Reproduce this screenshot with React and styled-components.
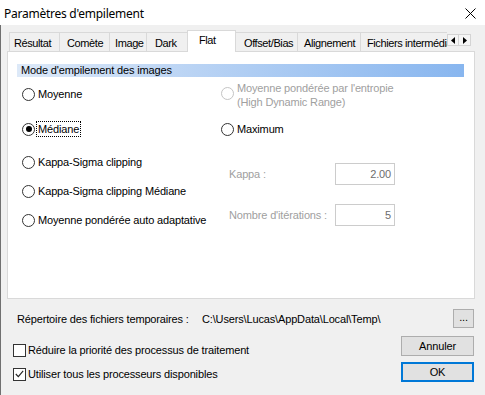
import React from "react";
import styled, { createGlobalStyle, css } from "styled-components";

const Global = createGlobalStyle`
  html, body {
    margin: 0;
    padding: 0;
    background: #f0f0f0;
  }
  body {
    font-family: "Liberation Sans", Arial, sans-serif;
    font-size: 11px;
    letter-spacing: -0.15px;
    color: #000;
  }
`;

const Window = styled.div`
  width: 485px;
  height: 395px;
  display: flex;
  flex-direction: column;
  background: #f0f0f0;
  overflow: hidden;
`;

const TitleBar = styled.div`
  height: 25px;
  flex: none;
  background: #fff;
  display: flex;
  align-items: center;
  justify-content: space-between;
  padding: 0 9px 0 4px;
`;

const Title = styled.span`
  font-family: "Noto Sans", "Liberation Sans", sans-serif;
  font-size: 12px;
  letter-spacing: -0.25px;
  padding-top: 1px;
`;

const Close = styled.svg`
  width: 11px;
  height: 11px;
  margin-top: 2px;
`;

const Body = styled.div`
  flex: 1;
  border-left: 1px solid #707070;
  padding: 5px 10px 0 6px;
  display: flex;
  flex-direction: column;
`;

const TabStrip = styled.div`
  height: 21px;
  display: flex;
  align-items: flex-end;
  position: relative;
  z-index: 1;
`;

const TabList = styled.div`
  display: flex;
  align-items: flex-end;
  box-sizing: border-box;
  width: 440px;
  padding-left: 2px;
  overflow: hidden;
  height: 22px;
  margin-bottom: -1px;
`;

const Tab = styled.div`
  flex: none;
  box-sizing: border-box;
  width: ${(p) => p.$w}px;
  height: 19px;
  padding-left: ${(p) => p.$pl}px;
  border: 1px solid #d9d9d9;
  border-bottom: none;
  margin-right: -1px;
  margin-bottom: 1px;
  background: #f0f0f0;
  line-height: 20px;
  letter-spacing: -0.4px;
  white-space: nowrap;
  overflow: hidden;
  ${(p) =>
    p.$active &&
    css`
      height: 22px;
      margin-bottom: 0;
      background: #fff;
      line-height: 19px;
      position: relative;
      z-index: 2;
    `}
`;

const Arrows = styled.div`
  display: flex;
  margin: 0 0 5px 0;
`;

const ArrowBtn = styled.div`
  width: 12px;
  height: 12px;
  box-sizing: border-box;
  border: 1px solid #d4d4d4;
  background: #f5f5f5;
  display: grid;
  place-items: center;
  & + & {
    border-left: none;
  }
`;

const Panel = styled.div`
  height: 248px;
  box-sizing: border-box;
  background: #fff;
  border: 1px solid #d9d9d9;
  padding: 12px 10px 0 9px;
  width: 468px;
`;

const HeaderBar = styled.div`
  height: 13px;
  line-height: 13px;
  padding-left: 4px;
  background: linear-gradient(to right, #dde9f8 0%, #b9d3f4 40%, #88b6ef 100%);
`;

const Columns = styled.div`
  display: grid;
  grid-template-columns: 199px 1fr;
  padding-left: 5px;
`;

const Column = styled.div`
  display: flex;
  flex-direction: column;
`;

const Option = styled.div`
  display: flex;
  align-items: ${(p) => (p.$multi ? "flex-start" : "center")};
  gap: 3px;
  min-height: 16px;
  margin-top: ${(p) => p.$mt}px;
  color: ${(p) => (p.$disabled ? "#a0a0a0" : "#000")};
`;

const Radio = styled.span`
  flex: none;
  width: 13px;
  height: 13px;
  box-sizing: border-box;
  border-radius: 50%;
  border: 1px solid ${(p) => (p.$disabled ? "#c4c4c4" : "#333")};
  background: #fff;
  display: grid;
  place-items: center;
  margin-top: ${(p) => p.$mt || 0}px;
  &::after {
    content: "";
    width: 6px;
    height: 6px;
    border-radius: 50%;
    background: ${(p) => (p.$checked ? "#000" : "transparent")};
  }
`;

const Label = styled.span`
  line-height: 14px;
  ${(p) =>
    p.$focused &&
    css`
      border: 1px dotted #000;
      padding: 0 1px;
      margin-left: -2px;
    `}
`;

const FieldRow = styled.div`
  display: flex;
  align-items: center;
  height: 22px;
  margin-top: ${(p) => p.$mt}px;
  padding-left: 8px;
  color: #a0a0a0;
`;

const FieldLabel = styled.span`
  width: 106px;
`;

const Input = styled.div`
  width: 60px;
  height: 22px;
  box-sizing: border-box;
  border: 1px solid #cccccc;
  background: #fff;
  color: #6d6d6d;
  text-align: right;
  padding-right: 3px;
  line-height: 20px;
`;

const TempRow = styled.div`
  display: flex;
  align-items: center;
  height: 19px;
  margin-top: 10px;
  padding-left: 10px;
`;

const TempLabel = styled.span`
  width: 185px;
`;

const Button = styled.div`
  box-sizing: border-box;
  width: ${(p) => p.$w}px;
  height: ${(p) => p.$h}px;
  background: #e1e1e1;
  border: ${(p) => (p.$default ? "2px solid #0078d7" : "1px solid #adadad")};
  display: grid;
  place-items: center;
  line-height: 1;
`;

const Dots = styled(Button)`
  margin-left: auto;
  margin-right: 1px;
  padding-bottom: 2px;
`;

const Footer = styled.div`
  display: flex;
  justify-content: space-between;
  margin-top: 8px;
  padding-right: 1px;
`;

const Checks = styled.div`
  display: flex;
  flex-direction: column;
  gap: 8px;
  margin-top: 6px;
  padding-left: 6px;
`;

const CheckItem = styled.div`
  display: flex;
  align-items: center;
  gap: 2px;
  height: 16px;
`;

const Box = styled.span`
  width: 13px;
  height: 13px;
  box-sizing: border-box;
  border: 1px solid #333;
  background: #fff;
  display: grid;
  place-items: center;
`;

const Buttons = styled.div`
  display: flex;
  flex-direction: column;
  gap: 6px;
`;

const tabs = [
  { t: "Résultat", w: 51, pl: 4 },
  { t: "Comète", w: 51, pl: 7 },
  { t: "Image", w: 38, pl: 5 },
  { t: "Dark", w: 42, pl: 8 },
  { t: "Flat", w: 49, pl: 11, active: true },
  { t: "Offset/Bias", w: 63, pl: 8 },
  { t: "Alignement", w: 64, pl: 6 },
  { t: "Fichiers intermédiaires", w: 120, pl: 6 },
];

export default function App() {
  return (
    <Window>
      <Global />
      <TitleBar>
        <Title>Paramètres d'empilement</Title>
        <Close viewBox="0 0 11 11">
          <path d="M0.5 0.5 L10.5 10.5 M10.5 0.5 L0.5 10.5" stroke="#000" strokeWidth="1" />
        </Close>
      </TitleBar>
      <Body>
        <TabStrip>
          <TabList>
            {tabs.map((tab) => (
              <Tab key={tab.t} $w={tab.w} $pl={tab.pl} $active={tab.active}>
                {tab.t}
              </Tab>
            ))}
          </TabList>
          <Arrows>
            <ArrowBtn>
              <svg width="4" height="7" viewBox="0 0 4 7">
                <path d="M4 0 L0 3.5 L4 7 Z" fill="#000" />
              </svg>
            </ArrowBtn>
            <ArrowBtn>
              <svg width="4" height="7" viewBox="0 0 4 7">
                <path d="M0 0 L4 3.5 L0 7 Z" fill="#000" />
              </svg>
            </ArrowBtn>
          </Arrows>
        </TabStrip>
        <Panel>
          <HeaderBar>Mode d'empilement des images</HeaderBar>
          <Columns>
            <Column>
              <Option $mt={9}>
                <Radio />
                <Label>Moyenne</Label>
              </Option>
              <Option $mt={19}>
                <Radio $checked />
                <Label $focused>Médiane</Label>
              </Option>
              <Option $mt={17}>
                <Radio />
                <Label>Kappa-Sigma clipping</Label>
              </Option>
              <Option $mt={13}>
                <Radio />
                <Label>Kappa-Sigma clipping Médiane</Label>
              </Option>
              <Option $mt={13}>
                <Radio />
                <Label>Moyenne pondérée auto adaptative</Label>
              </Option>
            </Column>
            <Column>
              <Option $mt={4} $multi $disabled>
                <Radio $disabled $mt={6} />
                <Label>
                  Moyenne pondérée par l'entropie
                  <br />
                  (High Dynamic Range)
                </Label>
              </Option>
              <Option $mt={12}>
                <Radio />
                <Label>Maximum</Label>
              </Option>
              <FieldRow $mt={26}>
                <FieldLabel>Kappa :</FieldLabel>
                <Input>2.00</Input>
              </FieldRow>
              <FieldRow $mt={19}>
                <FieldLabel>Nombre d'itérations :</FieldLabel>
                <Input>5</Input>
              </FieldRow>
            </Column>
          </Columns>
        </Panel>
        <TempRow>
          <TempLabel>Répertoire des fichiers temporaires :</TempLabel>
          <span>C:\Users\Lucas\AppData\Local\Temp\</span>
          <Dots $w={21} $h={19}>...</Dots>
        </TempRow>
        <Footer>
          <Checks>
            <CheckItem>
              <Box />
              <span>Réduire la priorité des processus de traitement</span>
            </CheckItem>
            <CheckItem>
              <Box>
                <svg width="9" height="8" viewBox="0 0 9 8">
                  <path d="M0.8 4 L3.3 6.6 L8.2 0.8" stroke="#222" strokeWidth="1.1" fill="none" />
                </svg>
              </Box>
              <span>Utiliser tous les processeurs disponibles</span>
            </CheckItem>
          </Checks>
          <Buttons>
            <Button $w={73} $h={20}>Annuler</Button>
            <Button $w={73} $h={20} $default>OK</Button>
          </Buttons>
        </Footer>
      </Body>
    </Window>
  );
}
